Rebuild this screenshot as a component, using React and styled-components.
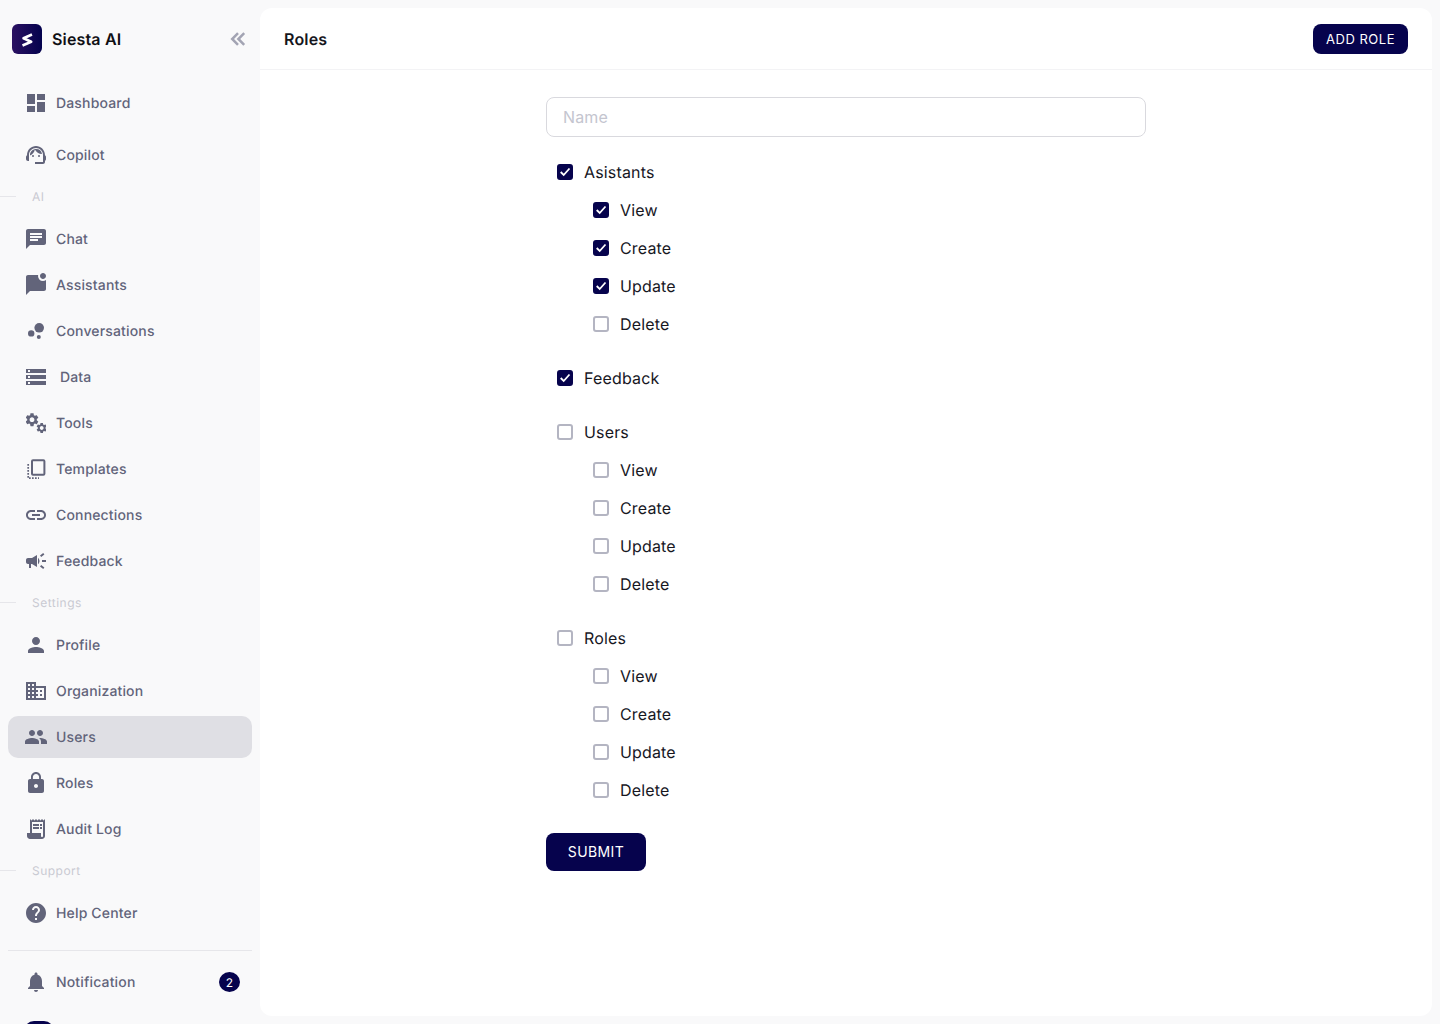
import React from 'react';
import styled, { createGlobalStyle } from 'styled-components';
import {
    MdDashboard, MdOutlineSupportAgent, MdChat, MdMarkChatUnread, MdBubbleChart, MdStorage,
    MdLink, MdCampaign, MdPerson, MdDomain, MdPeople, MdLock, MdReceiptLong,
    MdHelp, MdNotifications,
} from 'react-icons/md';

const GlobalStyle = createGlobalStyle`
    html, body {
        margin: 0;
        padding: 0;
        height: 100%;
        overflow: hidden;
        background-color: #f9f9fa;
        font-family: Inter, "Liberation Sans", sans-serif;
        text-rendering: geometricPrecision;
        letter-spacing: 0.01em;
    }
`;

const Page = styled.div`
    display: flex;
    height: 100vh;
    overflow: hidden;
`;

const Sidebar = styled.aside`
    width: 260px;
    flex-shrink: 0;
    display: flex;
    flex-direction: column;
    overflow: hidden;
`;

const Brand = styled.div`
    display: flex;
    align-items: center;
    height: 30px;
    padding: 24px 12px 0;
    margin-bottom: 28px;
`;

const LogoMark = styled.div`
    width: 30px;
    height: 30px;
    border-radius: 6px;
    background: linear-gradient(90deg, #2b1162, #04024d);
    display: flex;
    margin-right: 10px;
`;

const BrandName = styled.span`
    flex: 1;
    font-size: 16px;
    font-weight: 600;
    color: #0f0f14;
`;

const Collapse = styled.span`
    display: flex;
    color: #a3a4b3;
    margin-right: 2.5px;
`;

const NavItem = styled.div`
    display: flex;
    align-items: center;
    flex-shrink: 0;
    box-sizing: border-box;
    height: 42px;
    margin: 0 8px ${(p) => p.$gap}px;
    padding: 0 18px;
    border-radius: 10px;
    background-color: ${(p) => (p.$active ? '#dfdfe4' : 'transparent')};
    color: #62647a;
    font-size: 14px;
    font-weight: 500;
`;

const NavIcon = styled.span`
    width: 20px;
    height: 20px;
    display: flex;
    align-items: center;
    justify-content: center;
    margin-right: ${(p) => p.$space}px;
    font-size: ${(p) => p.$size}px;
    flex-shrink: 0;
    svg {
        flex-shrink: 0;
    }
`;

const Section = styled.div`
    display: flex;
    align-items: center;
    flex-shrink: 0;
    box-sizing: border-box;
    height: 42px;
    padding-bottom: 2px;
    font-size: 12px;
    letter-spacing: 0.04em;
    color: #c9cad2;
    &::before {
        content: "";
        width: 16px;
        height: 1px;
        margin-right: 16px;
        background-color: #e6e6ea;
    }
`;

const Divider = styled.div`
    flex-shrink: 0;
    height: 1px;
    margin: 16px 8px 10px;
    background-color: #e6e6ea;
`;

const NavLabel = styled.span`
    flex: 1;
`;

const Badge = styled.span`
    width: 21px;
    height: 20px;
    margin-right: -6px;
    border-radius: 50%;
    background-color: #06034d;
    color: #ffffff;
    font-size: 12px;
    font-weight: 400;
    display: flex;
    align-items: center;
    justify-content: center;
`;

const Avatar = styled.div`
    flex-shrink: 0;
    width: 30px;
    height: 30px;
    margin: 18px 0 0 24px;
    border-radius: 10px;
    background-color: #06034d;
`;

const Main = styled.main`
    flex: 1;
    margin: 8px 8px 8px 0;
    background-color: #ffffff;
    border-radius: 12px;
    display: flex;
    flex-direction: column;
    overflow: hidden;
`;

const Header = styled.header`
    display: flex;
    align-items: center;
    justify-content: space-between;
    height: 61px;
    padding: 0 24px;
    border-bottom: 1px solid #f3f3f5;
    flex-shrink: 0;
`;

const Title = styled.h1`
    margin: 0;
    font-size: 16px;
    font-weight: 600;
    color: #15151c;
`;

const AddButton = styled.button`
    height: 30px;
    width: 95px;
    padding: 1px 0 0;
    border: none;
    border-radius: 8px;
    background-color: #06034d;
    color: #ffffff;
    font-family: inherit;
    font-size: 13px;
    font-weight: 400;
    letter-spacing: 0.04em;
`;

const Form = styled.form`
    width: 600px;
    margin: 27px auto 0;
    display: flex;
    flex-direction: column;
`;

const NameInput = styled.input`
    box-sizing: border-box;
    width: 100%;
    height: 40px;
    padding: 0 16px;
    border: 1px solid #d9d9de;
    border-radius: 8px;
    font-family: inherit;
    font-size: 16px;
    letter-spacing: 0.01em;
    outline: none;
    &::placeholder {
        color: #c4c5cf;
    }
`;

const Groups = styled.div`
    margin-top: 16px;
    display: flex;
    flex-direction: column;
    gap: 16px;
`;

const CheckRow = styled.label`
    display: flex;
    align-items: center;
    height: 38px;
    padding-left: ${(p) => (p.$nested ? 47 : 11)}px;
    font-size: 16px;
    color: #17171f;
`;

const Check = styled.input`
    appearance: none;
    box-sizing: border-box;
    position: relative;
    width: 16px;
    height: 16px;
    margin: 0 11px 0 0;
    border: 2px solid #b4b5c2;
    border-radius: 3px;
    background-color: #ffffff;
    &:checked {
        border-color: #06034d;
        background-color: #06034d;
    }
    &:checked::after {
        content: "";
        position: absolute;
        inset: -2px;
        background: url("data:image/svg+xml,%3Csvg xmlns='http://www.w3.org/2000/svg' width='16' height='16'%3E%3Cpath d='M3.7 8 6.7 11 12.5 4.5' fill='none' stroke='white' stroke-width='1.8'/%3E%3C/svg%3E") no-repeat;
    }
`;

const SubmitButton = styled.button`
    align-self: flex-start;
    width: 100px;
    height: 38px;
    margin-top: 24px;
    padding: 0 0 1px;
    border: none;
    border-radius: 8px;
    background-color: #06034d;
    color: #ffffff;
    font-family: inherit;
    font-size: 14px;
    font-weight: 400;
    letter-spacing: 0.03em;
`;

const Logo = () => (
    <svg width="30" height="30" viewBox="0 0 30 30" fill="none">
        <path d="M20 10.5 11.5 14.3 19.2 17.7 10.5 21.5" stroke="#ffffff" strokeWidth="2.6" strokeLinejoin="round" />
    </svg>
);

const DoubleChevron = () => (
    <svg width="16" height="14" viewBox="0 0 16 14" fill="none" stroke="currentColor" strokeWidth="2.5">
        <path d="M8 1.2 2.2 7 8 12.8" />
        <path d="M14.2 1.2 8.4 7l5.8 5.8" />
    </svg>
);

const gearPath = 'M19.14 12.94c.04-.3.06-.61.06-.94 0-.32-.02-.64-.07-.94l2.03-1.58c.18-.14.23-.41.12-.61l-1.92-3.32c-.12-.22-.37-.29-.59-.22l-2.39.96c-.5-.38-1.03-.7-1.62-.94l-.36-2.54c-.04-.24-.24-.41-.48-.41h-3.84c-.24 0-.43.17-.47.41l-.36 2.54c-.59.24-1.13.57-1.62.94l-2.39-.96c-.22-.08-.47 0-.59.22L2.74 8.87c-.12.21-.08.47.12.61l2.03 1.58c-.05.3-.09.63-.09.94s.02.64.07.94l-2.03 1.58c-.18.14-.23.41-.12.61l1.92 3.32c.12.22.37.29.59.22l2.39-.96c.5.38 1.03.7 1.62.94l.36 2.54c.05.24.24.41.48.41h3.84c.24 0 .44-.17.47-.41l.36-2.54c.59-.24 1.13-.56 1.62-.94l2.39.96c.22.08.47 0 .59-.22l1.92-3.32c.12-.22.07-.47-.12-.61l-2.01-1.58zM12 15.6c-1.98 0-3.6-1.62-3.6-3.6s1.62-3.6 3.6-3.6 3.6 1.62 3.6 3.6-1.62 3.6-3.6 3.6z';

const ToolsIcon = () => (
    <svg width="20" height="20" viewBox="0 0 20 20" fill="currentColor">
        <path transform="translate(-2.04 -1.34) scale(0.67)" d={gearPath} />
        <path transform="translate(9.34 8.64) scale(0.53)" d={gearPath} />
    </svg>
);

const TemplatesIcon = () => (
    <svg width="20" height="20" viewBox="0 0 20 20" fill="none" stroke="currentColor">
        <rect x="6" y="1.3" width="12.4" height="14.4" rx="1" strokeWidth="2" />
        <path d="M2.2 5V19.2H13" strokeWidth="1.7" strokeDasharray="1.7 1.3" />
    </svg>
);

const sectionsA = [
    { label: 'Dashboard', icon: MdDashboard, size: 24, gap: 10 },
    { label: 'Copilot', icon: MdOutlineSupportAgent, size: 24, gap: 0 },
];
const sectionsB = [
    { label: 'Chat', icon: MdChat, size: 24 },
    { label: 'Assistants', icon: MdMarkChatUnread, size: 24 },
    { label: 'Conversations', icon: MdBubbleChart, size: 24 },
    { label: 'Data', icon: MdStorage, size: 24, space: 14 },
    { label: 'Tools', icon: ToolsIcon, size: 20 },
    { label: 'Templates', icon: TemplatesIcon, size: 20 },
    { label: 'Connections', icon: MdLink, size: 24 },
    { label: 'Feedback', icon: MdCampaign, size: 24 },
];
const sectionsC = [
    { label: 'Profile', icon: MdPerson, size: 24 },
    { label: 'Organization', icon: MdDomain, size: 24 },
    { label: 'Users', icon: MdPeople, size: 24, active: true },
    { label: 'Roles', icon: MdLock, size: 24 },
    { label: 'Audit Log', icon: MdReceiptLong, size: 24 },
];

const renderItems = (items, lastGap = 0) =>
    items.map((item, i) => {
        const Icon = item.icon;
        const gap = item.gap !== undefined ? item.gap : i === items.length - 1 ? lastGap : 4;
        return (
            <NavItem key={item.label} $active={item.active} $gap={gap}>
                <NavIcon $size={item.size} $space={item.space || 10}><Icon /></NavIcon>
                <NavLabel>{item.label}</NavLabel>
            </NavItem>
        );
    });

const perms = [
    { name: 'Asistants', checked: true, children: [['View', true], ['Create', true], ['Update', true], ['Delete', false]] },
    { name: 'Feedback', checked: true, children: [] },
    { name: 'Users', checked: false, children: [['View', false], ['Create', false], ['Update', false], ['Delete', false]] },
    { name: 'Roles', checked: false, children: [['View', false], ['Create', false], ['Update', false], ['Delete', false]] },
];

const App = () => {
    return (
        <Page>
            <GlobalStyle />
            <Sidebar>
                <Brand>
                    <LogoMark><Logo /></LogoMark>
                    <BrandName>Siesta AI</BrandName>
                    <Collapse><DoubleChevron /></Collapse>
                </Brand>
                {renderItems(sectionsA)}
                <Section>AI</Section>
                {renderItems(sectionsB)}
                <Section>Settings</Section>
                {renderItems(sectionsC)}
                <Section>Support</Section>
                <NavItem $gap={0}>
                    <NavIcon $size={24} $space={10}><MdHelp /></NavIcon>
                    <NavLabel>Help Center</NavLabel>
                </NavItem>
                <Divider />
                <NavItem $gap={0}>
                    <NavIcon $size={24} $space={10}><MdNotifications /></NavIcon>
                    <NavLabel>Notification</NavLabel>
                    <Badge>2</Badge>
                </NavItem>
                <Avatar />
            </Sidebar>
            <Main>
                <Header>
                    <Title>Roles</Title>
                    <AddButton type="button">ADD ROLE</AddButton>
                </Header>
                <Form onSubmit={(e) => e.preventDefault()}>
                    <NameInput placeholder="Name" />
                    <Groups>
                        {perms.map((group) => (
                            <div key={group.name}>
                                <CheckRow>
                                    <Check type="checkbox" defaultChecked={group.checked} />
                                    {group.name}
                                </CheckRow>
                                {group.children.map(([label, checked]) => (
                                    <CheckRow $nested key={label}>
                                        <Check type="checkbox" defaultChecked={checked} />
                                        {label}
                                    </CheckRow>
                                ))}
                            </div>
                        ))}
                    </Groups>
                    <SubmitButton type="submit">SUBMIT</SubmitButton>
                </Form>
            </Main>
        </Page>
    );
};

export default App;
